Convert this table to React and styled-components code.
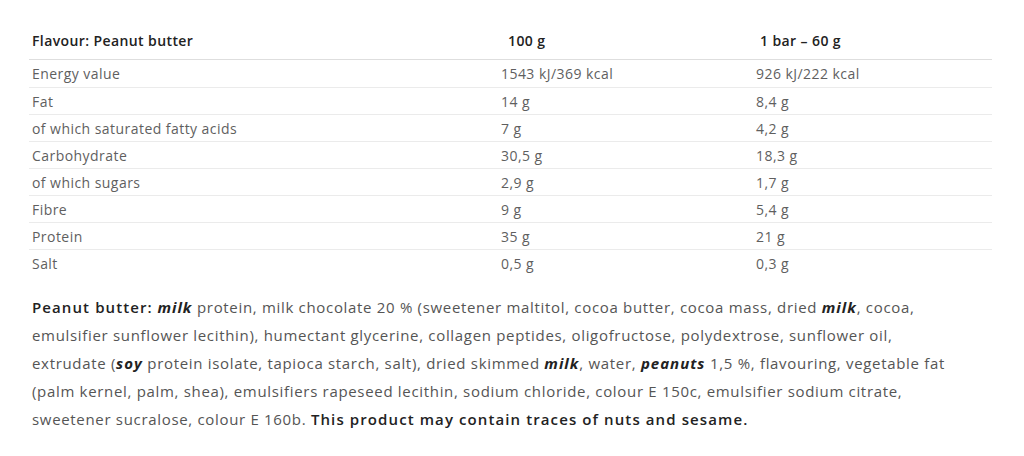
import React from "react";
import styled, { createGlobalStyle } from "styled-components";

const GlobalStyle = createGlobalStyle`
  html, body {
    margin: 0;
    padding: 0;
    background: #fff;
  }
  body {
    font-family: "Open Sans", "Liberation Sans", sans-serif;
    color: #555;
  }
`;

const Page = styled.div`
  padding: 26px 32px 0 29px;
  width: 1024px;
  box-sizing: border-box;
`;

const Table = styled.div`
  display: grid;
  grid-template-columns: 469px 255px 1fr;
`;

const HeadCell = styled.div`
  height: 34px;
  display: flex;
  align-items: center;
  padding-left: ${({ $indent }) => $indent || 3}px;
  padding-bottom: 4px;
  box-sizing: border-box;
  font-size: 14px;
  letter-spacing: 0.4px;
  font-weight: 600;
  color: #222;
  border-bottom: 1px solid #dedede;
`;

const Cell = styled.div`
  height: 27px;
  display: flex;
  align-items: center;
  padding-left: 3px;
  font-size: 14px;
  letter-spacing: 0.45px;
  color: #5f5f5f;
  border-top: ${({ $first }) => ($first ? "none" : "1px solid #ebebeb")};
  box-sizing: border-box;
`;

const Ingredients = styled.p`
  margin: 17px 0 0 3px;
  font-size: 15px;
  letter-spacing: 0.68px;
  line-height: 28px;
  color: #555;
  white-space: nowrap;
`;

const Strong = styled.b`
  font-weight: 600;
  letter-spacing: 1.1px;
  color: #222;
`;

const Allergen = styled.i`
  font-weight: 700;
  font-style: italic;
  letter-spacing: 1px;
  color: #222;
`;

const rows = [
  ["Energy value", "1543 kJ/369 kcal", "926 kJ/222 kcal"],
  ["Fat", "14 g", "8,4 g"],
  ["of which saturated fatty acids", "7 g", "4,2 g"],
  ["Carbohydrate", "30,5 g", "18,3 g"],
  ["of which sugars", "2,9 g", "1,7 g"],
  ["Fibre", "9 g", "5,4 g"],
  ["Protein", "35 g", "21 g"],
  ["Salt", "0,5 g", "0,3 g"],
];

export default function App() {
  return (
    <Page>
      <GlobalStyle />
      <Table>
        <HeadCell>Flavour: Peanut butter</HeadCell>
        <HeadCell $indent={10}>100 g</HeadCell>
        <HeadCell $indent={7}>1 bar – 60 g</HeadCell>
        {rows.map((row, i) =>
          row.map((value, j) => (
            <Cell key={`${i}-${j}`} $first={i === 0}>
              {value}
            </Cell>
          ))
        )}
      </Table>
      <Ingredients>
        <Strong>Peanut butter:</Strong> <Allergen>milk</Allergen> protein, milk
        chocolate 20 % (sweetener maltitol, cocoa butter, cocoa mass, dried{" "}
        <Allergen>milk</Allergen>, cocoa,
        <br />
        emulsifier sunflower lecithin), humectant glycerine, collagen peptides,
        oligofructose, polydextrose, sunflower oil,
        <br />
        extrudate (<Allergen>soy</Allergen> protein isolate, tapioca starch,
        salt), dried skimmed <Allergen>milk</Allergen>, water,{" "}
        <Allergen>peanuts</Allergen> 1,5 %, flavouring, vegetable fat
        <br />
        (palm kernel, palm, shea), emulsifiers rapeseed lecithin, sodium
        chloride, colour E 150c, emulsifier sodium citrate,
        <br />
        sweetener sucralose, colour E 160b.{" "}
        <Strong>This product may contain traces of nuts and sesame.</Strong>
      </Ingredients>
    </Page>
  );
}
